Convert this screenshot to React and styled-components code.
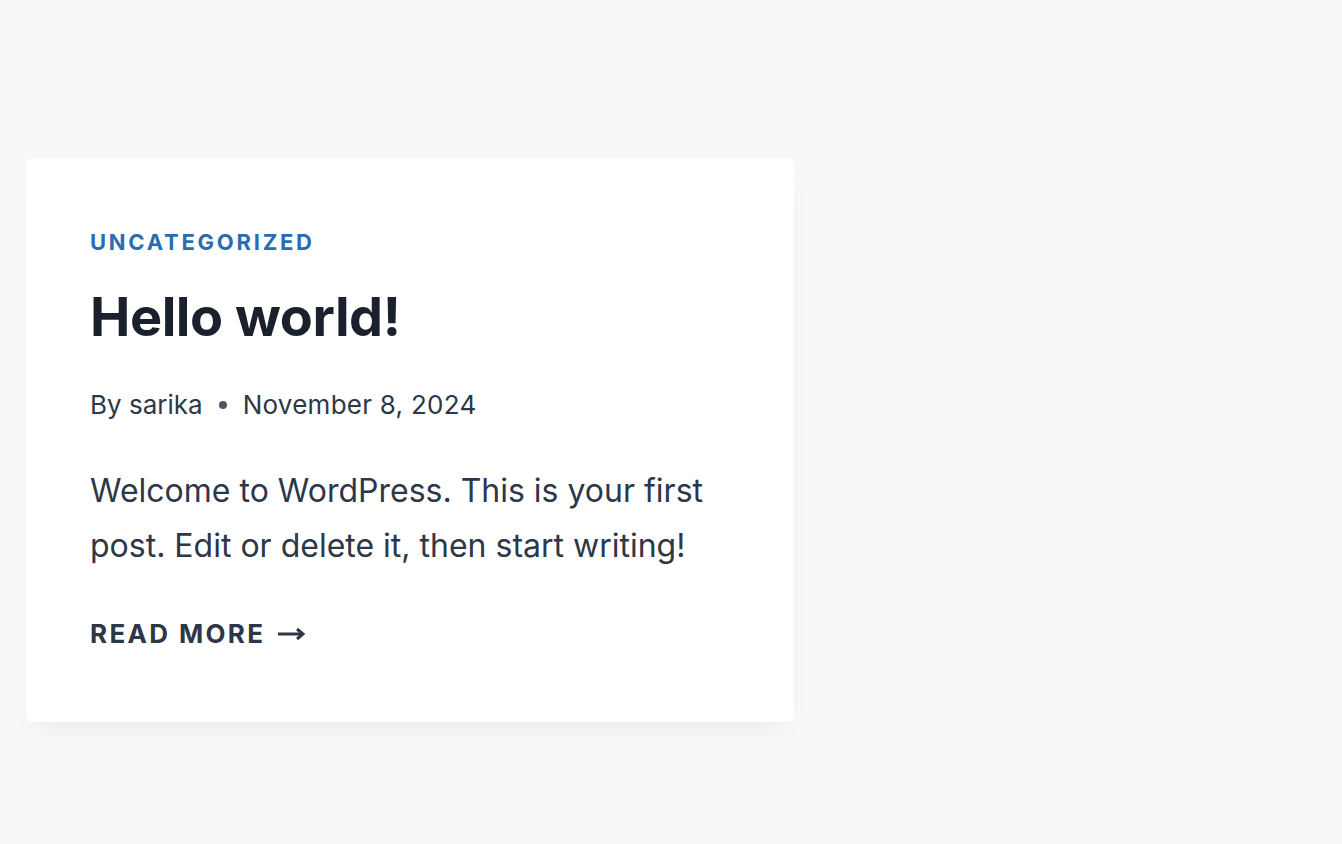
import React from 'react'
import styled, { createGlobalStyle } from 'styled-components'

const Global = createGlobalStyle`
  html, body {
    margin: 0;
    padding: 0;
    background: #f7f8fa;
    font-family: Inter, "Open Sans", sans-serif;
  }
`

const Page = styled.div`
  min-height: 844px;
  padding: 158px 0 0 26px;
  box-sizing: border-box;
`

const Card = styled.article`
  width: 768px;
  height: 564px;
  box-sizing: border-box;
  background: #fff;
  border-radius: 6px;
  padding: 66px 64px 0;
  box-shadow: 0 15px 25px -10px rgba(0, 0, 0, 0.06);
  display: flex;
  flex-direction: column;
  align-items: flex-start;
`

const Category = styled.a`
  font-size: 22px;
  font-weight: 700;
  letter-spacing: 0.125em;
  text-transform: uppercase;
  color: #2b6cb0;
  text-decoration: none;
  line-height: 36px;
`

const Title = styled.h2`
  margin: 25px 0 0;
  font-size: 54px;
  font-weight: 700;
  line-height: 1.2;
  color: #1a202c;
  letter-spacing: -0.008em;
`

const Meta = styled.div`
  margin-top: 35px;
  display: flex;
  align-items: center;
  gap: 16px;
  font-size: 26px;
  color: #2d3748;
  line-height: 40px;
`

const Dot = styled.span`
  width: 8px;
  height: 8px;
  border-radius: 50%;
  background: #4a5568;
`

const Date = styled.span`
  letter-spacing: 0.01em;
`

const Excerpt = styled.p`
  margin: 38px 0 0;
  font-size: 32px;
  line-height: 55px;
  color: #2d3748;
`

const ReadMore = styled.a`
  margin-top: 41px;
  display: flex;
  align-items: center;
  gap: 12px;
  font-size: 26px;
  font-weight: 700;
  letter-spacing: 0.09em;
  text-transform: uppercase;
  color: #2d3748;
  text-decoration: none;
  line-height: 40px;
`

const Arrow = () => (
  <svg width="28" height="14" viewBox="0 0 28 14" fill="none">
    <path d="M1 7h24" stroke="#2d3748" strokeWidth="3" />
    <path d="M20 2l6 5-6 5" stroke="#2d3748" strokeWidth="3" fill="none" />
  </svg>
)

export default function App() {
  return (
    <>
      <Global />
      <Page>
        <Card>
          <Category href="#">Uncategorized</Category>
          <Title>Hello world!</Title>
          <Meta>
            <span>By sarika</span>
            <Dot />
            <Date>November 8, 2024</Date>
          </Meta>
          <Excerpt>
            Welcome to WordPress. This is your first post. Edit or delete it, then start writing!
          </Excerpt>
          <ReadMore href="#">
            Read More <Arrow />
          </ReadMore>
        </Card>
      </Page>
    </>
  )
}
